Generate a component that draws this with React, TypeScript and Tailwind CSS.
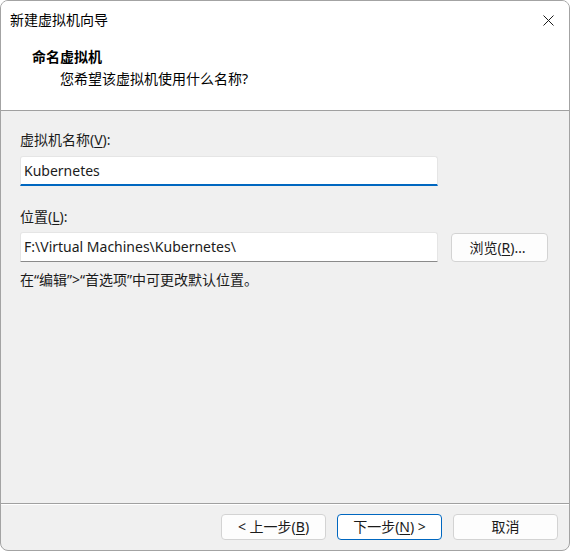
import type { ReactNode } from "react";

// Windows 11 style wizard dialog: "New Virtual Machine Wizard", name step.
const font = "font-['Noto_Sans','Noto_Sans_CJK_SC',sans-serif]";

function Key({ children }: { children: ReactNode }) {
  return <span className="underline underline-offset-2">{children}</span>;
}

function Button({ children, primary = false }: { children: ReactNode; primary?: boolean }) {
  return (
    <button
      className={
        "flex h-[26px] w-[105px] items-center justify-center rounded-[4px] border text-[14px] leading-5 text-[#1b1b1b] " +
        (primary ? "border-[#0067c0] bg-white" : "border-[#d3d3d3] bg-[#fdfdfd]")
      }
    >
      {children}
    </button>
  );
}

export default function App() {
  return (
    <div className={`h-[551px] w-[570px] bg-white ${font}`}>
      <div className="flex h-full w-full flex-col overflow-hidden rounded-[8px] border border-[#a3a3a3] bg-[#f0f0f0] text-[14px] leading-5 text-[#1b1b1b]">
        {/* title bar + page header */}
        <div className="h-[110px] shrink-0 border-b border-[#a0a0a0] bg-white">
          <div className="flex h-[38px] items-center justify-between pl-[9px] pr-[15px]">
            <span className="text-black">新建虚拟机向导</span>
            <svg width="11" height="11" viewBox="0 0 11 11" className="mt-[1px]">
              <path d="M0.5 0.5 L10.5 10.5 M10.5 0.5 L0.5 10.5" stroke="#1b1b1b" strokeWidth="1" fill="none" />
            </svg>
          </div>
          <div className="pl-[31px] pt-[8px]">
            <div className="font-bold text-black">命名虚拟机</div>
            <div className="mt-[2px] pl-[28px] text-black">您希望该虚拟机使用什么名称?</div>
          </div>
        </div>

        {/* form */}
        <div className="flex flex-1 flex-col px-[19px] pt-[19px]">
          <div>
            虚拟机名称(<Key>V</Key>):
          </div>
          <div className="mt-[6px] flex h-[30px] w-[418px] items-center rounded-t-[3px] border border-b-2 border-[#e5e5e5] border-b-[#0067c0] bg-white pl-[3px]">
            Kubernetes
          </div>

          <div className="mt-[21px]">
            位置(<Key>L</Key>):
          </div>
          <div className="mt-[5px] flex items-start gap-[13px]">
            <div className="flex h-[30px] w-[418px] items-center rounded-t-[3px] border border-[#e5e5e5] border-b-[#8a8a8a] bg-white pl-[3px]">
              F:\Virtual Machines\Kubernetes\
            </div>
            <button className="mt-[1px] flex h-[29px] w-[97px] items-center justify-center rounded-[4px] border border-[#d3d3d3] bg-[#fdfdfd] pr-[4px]">
              浏览(<Key>R</Key>)…
            </button>
          </div>

          <div className="mt-[8px]">在“编辑”&gt;“首选项”中可更改默认位置。</div>
        </div>

        {/* footer */}
        <div className="h-[47px] shrink-0 border-t border-[#a0a0a0]">
          <div className="flex h-full justify-end gap-[11px] border-t border-white pr-[11px] pt-[9px]">
            <Button>
              &lt; 上一步(<Key>B</Key>)
            </Button>
            <Button primary>
              下一步(<Key>N</Key>) &gt;
            </Button>
            <Button>取消</Button>
          </div>
        </div>
      </div>
    </div>
  );
}
